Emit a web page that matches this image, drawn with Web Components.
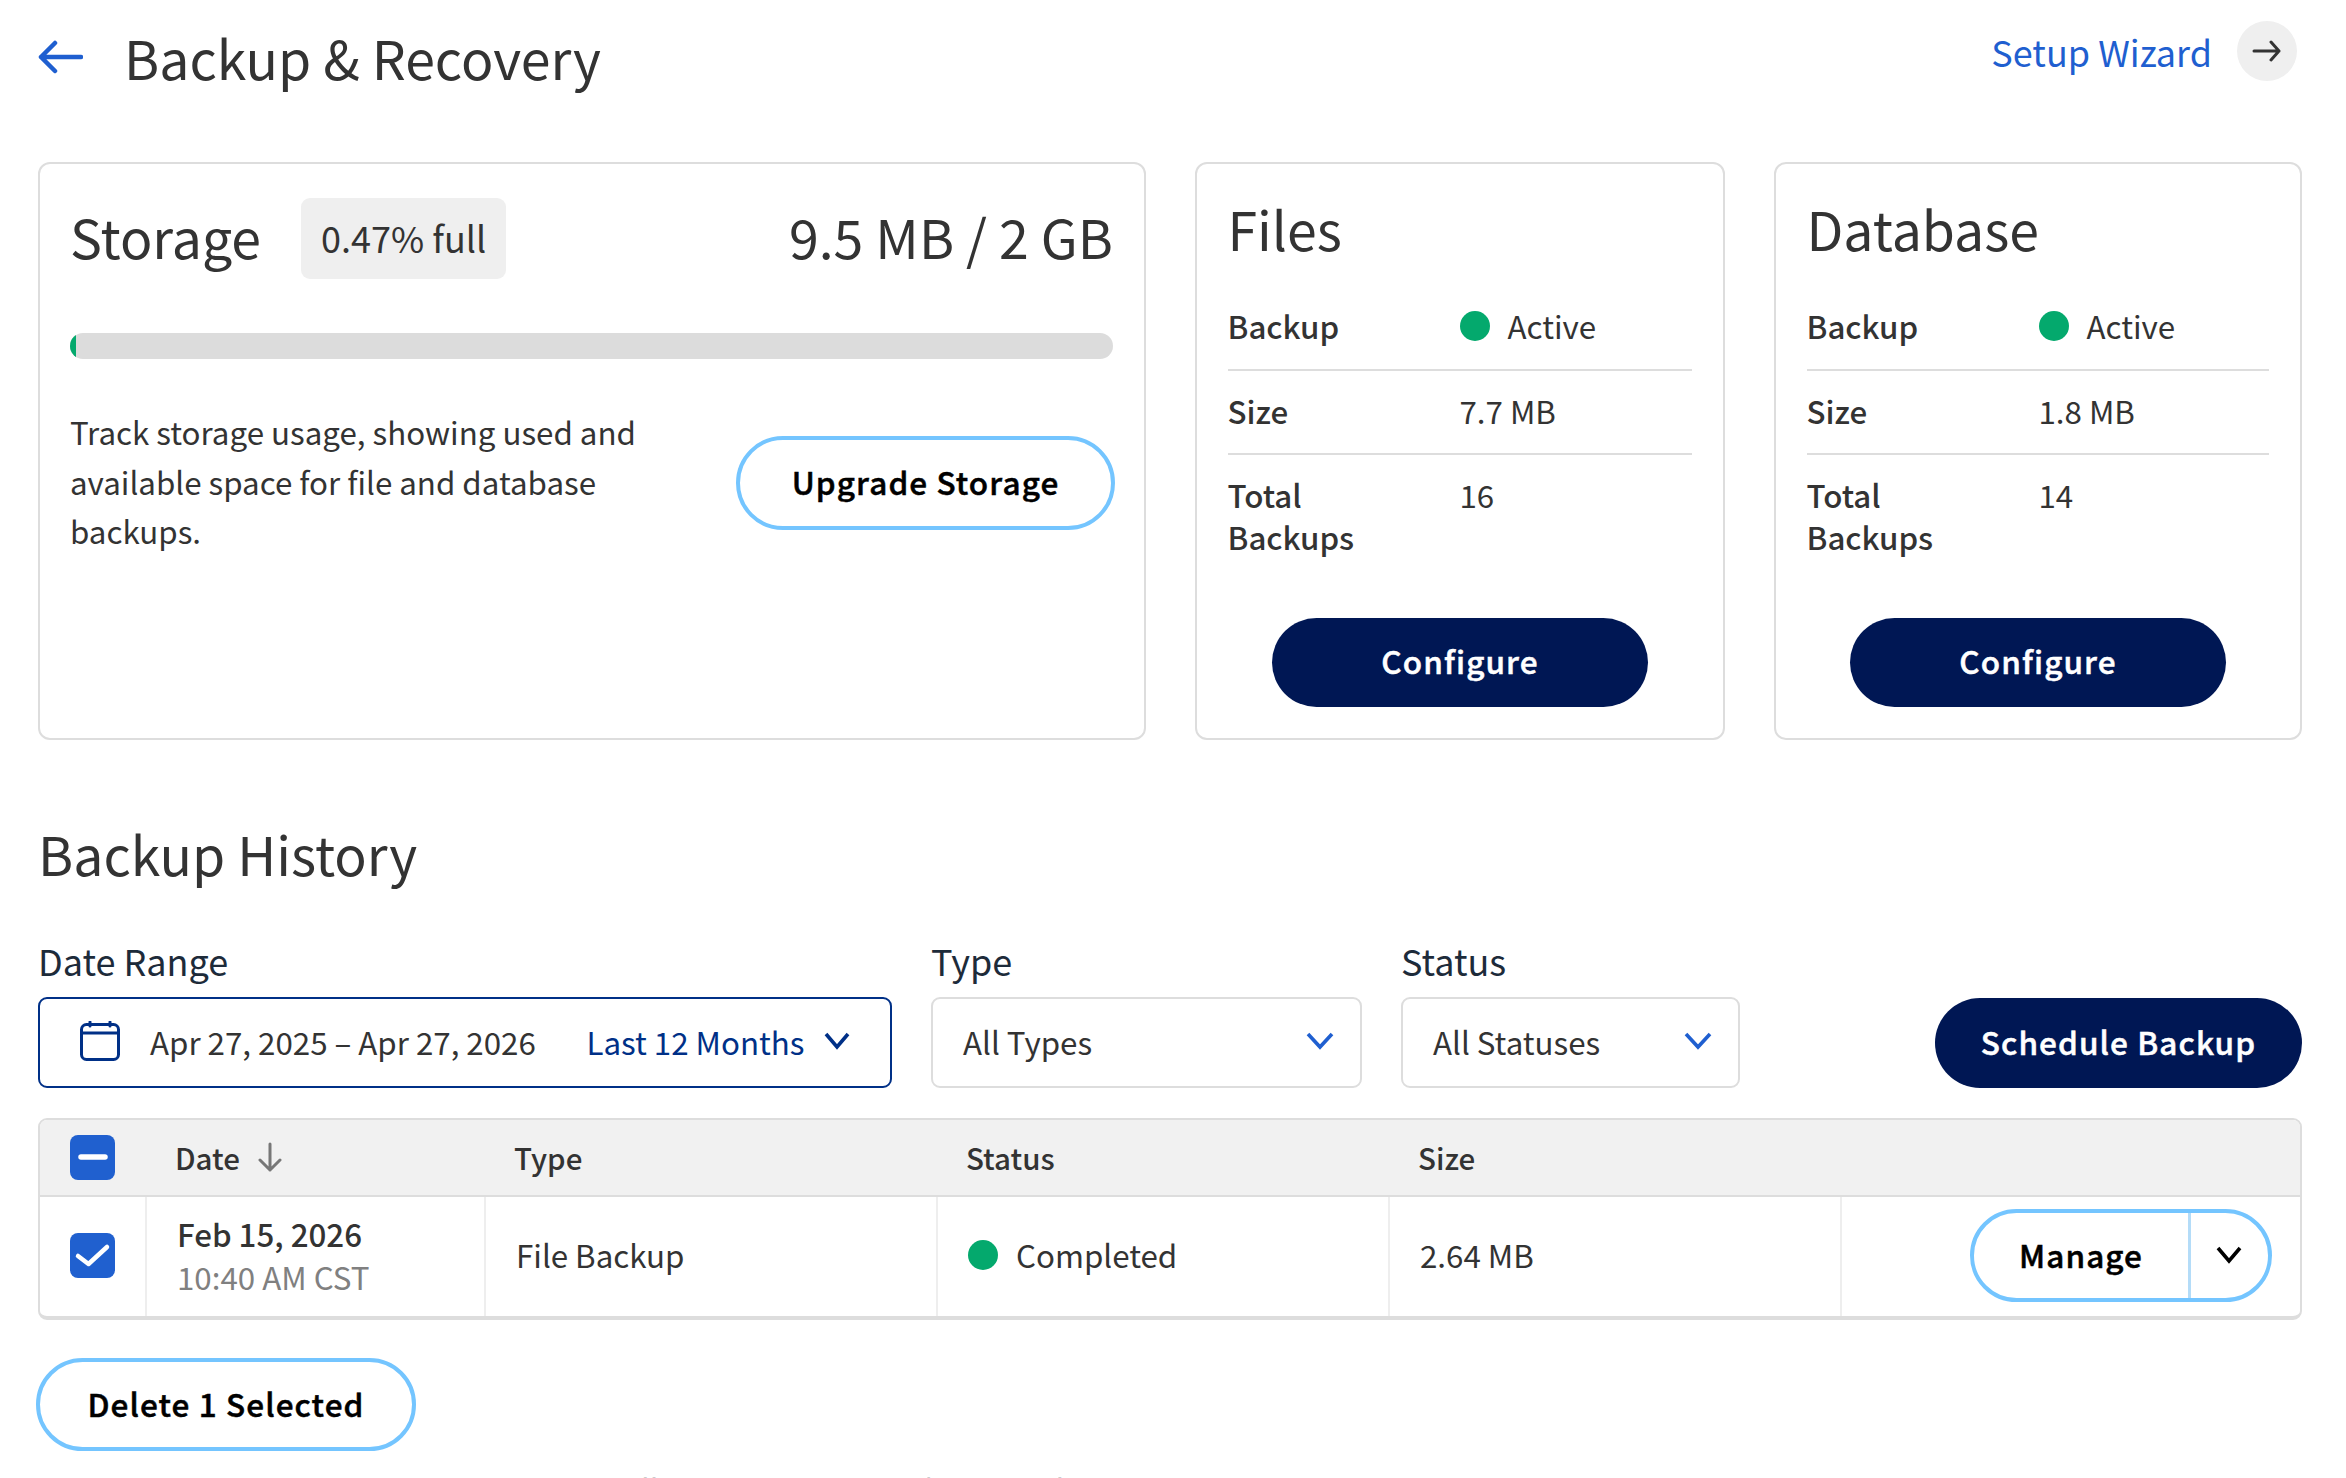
<!DOCTYPE html>
<html>
<head>
<meta charset="utf-8">
<title>Backup & Recovery</title>
<style>
html,body{margin:0;background:#fff;}
body{font-family:"Noto Sans CJK SC","Liberation Sans",sans-serif;color:#333;height:1478px;overflow:hidden;}
</style>
</head>
<body>
<backup-page></backup-page>
<script>
const baseStyle = `
  *{box-sizing:border-box;}
`

class PillButton extends HTMLElement{
    constructor(){
        super();
        const kind = this.getAttribute("kind") || "outline";
        this.attachShadow({mode:"open"}).innerHTML = `
        <style>
        ${baseStyle}
        :host{display:inline-flex;}
        .btn{display:flex;align-items:center;justify-content:center;border-radius:48px;font-size:31.5px;font-weight:500;-webkit-text-stroke:0.5px currentColor;line-height:40px;letter-spacing:1.1px;white-space:nowrap;width:100%;height:100%;padding-bottom:4px;}
        .outline{background:#fff;border:4px solid #74c5ff;color:#000;}
        .solid{background:#001754;color:#fff;}
        </style>
        <div class="btn ${kind}"><slot></slot></div>`;
    }
}
customElements.define("pill-button",PillButton);

class StatusDot extends HTMLElement{
    constructor(){
        super();
        this.attachShadow({mode:"open"}).innerHTML = `
        <style>
        :host{display:inline-flex;align-items:center;gap:18px;}
        i{display:block;width:30px;height:30px;border-radius:50%;background:#04a96d;flex:none;}
        </style>
        <i></i><span><slot></slot></span>`;
    }
}
customElements.define("status-dot",StatusDot);

class StatRow extends HTMLElement{
    constructor(){
        super();
        this.attachShadow({mode:"open"}).innerHTML = `
        <style>
        ${baseStyle}
        :host{display:grid;grid-template-columns:232px 1fr;font-size:31.3px;line-height:42px;padding:19px 0 21px;border-bottom:2px solid #ddd;color:#333;}
        :host([first]){padding-bottom:19.5px;}
        :host([last]){border-bottom:0;padding-bottom:0;}
        .k{font-weight:500;width:150px;}
        </style>
        <div class="k">${this.getAttribute("label")}</div><div><slot></slot></div>`;
    }
}
customElements.define("stat-row",StatRow);

class StatCard extends HTMLElement{
    constructor(){
        super();
        const h = this.getAttribute("heading");
        this.attachShadow({mode:"open"}).innerHTML = `
        <style>
        ${baseStyle}
        :host{display:block;border:2px solid #ddd;border-radius:12px;padding:28px 31px 29px 30.5px;height:578px;position:relative;background:#fff;}
        h2{margin:0 0 22px;font-size:53.6px;font-weight:400;line-height:72px;color:#333;}
        .foot{display:flex;justify-content:center;position:absolute;left:0;right:0;bottom:31.5px;}
        pill-button{width:376px;height:89px;}
        </style>
        <h2>${h}</h2>
        <slot></slot>
        <div class="foot"><pill-button kind="solid">Configure</pill-button></div>`;
    }
}
customElements.define("stat-card",StatCard);

class StorageCard extends HTMLElement{
    constructor(){
        super();
        this.attachShadow({mode:"open"}).innerHTML = `
        <style>
        ${baseStyle}
        :host{display:block;border:2px solid #ddd;border-radius:12px;padding:34px 31px 0 30px;height:578px;background:#fff;}
        .top{display:flex;align-items:center;height:81px;}
        h2{margin:0;font-size:53.6px;font-weight:400;line-height:72px;padding-bottom:6px;}
        .tag{margin-left:40px;height:81px;padding:0 20px 4px;background:#efefef;border-radius:9px;display:flex;align-items:center;font-size:36px;line-height:46px;color:#333;}
        .amt{margin-left:auto;font-size:53.6px;line-height:72px;padding-bottom:6px;}
        .bar{margin-top:54px;height:26px;border-radius:13px;background:#dcdcdc;overflow:hidden;}
        .bar i{display:block;height:100%;width:0.6%;background:#04a96d;}
        .low{display:flex;justify-content:space-between;margin-top:48px;}
        p{margin:0;width:600px;font-size:31.3px;line-height:49.5px;color:#333;}
        pill-button{width:379px;height:94px;margin-top:29px;margin-right:-2px;}
        </style>
        <div class="top"><h2>Storage</h2><div class="tag">0.47% full</div><div class="amt">9.5 MB / 2 GB</div></div>
        <div class="bar"><i></i></div>
        <div class="low">
          <p>Track storage usage, showing used and available space for file and database backups.</p>
          <pill-button>Upgrade Storage</pill-button>
        </div>`;
    }
}
customElements.define("storage-card",StorageCard);

class FieldSelect extends HTMLElement{
    constructor(){
        super();
        const w = this.getAttribute("width");
        this.attachShadow({mode:"open"}).innerHTML = `
        <style>
        ${baseStyle}
        :host{display:block;width:${w}px;}
        label{display:block;font-size:36px;line-height:46px;color:#1d2b3a;margin-bottom:14px;}
        .box{display:flex;align-items:center;justify-content:space-between;height:91px;border:2px solid #ddd;border-radius:9px;padding:0 26px 2px 30px;font-size:31.3px;color:#333;}
        svg{display:block;flex:none;margin-bottom:1px;}
        </style>
        <label>${this.getAttribute("label")}</label>
        <div class="box"><span>${this.getAttribute("value")}</span>
        <svg width="28" height="18" viewBox="0 0 28 18" fill="none" stroke="#1f5fd0" stroke-width="3.6"><path d="M2 2l12 13L26 2"/></svg></div>`;
    }
}
customElements.define("field-select",FieldSelect);

class DateRange extends HTMLElement{
    constructor(){
        super();
        this.attachShadow({mode:"open"}).innerHTML = `
        <style>
        ${baseStyle}
        :host{display:block;width:854px;}
        label{display:block;font-size:36px;line-height:46px;color:#1d2b3a;margin-bottom:14px;}
        .box{display:flex;align-items:center;height:91px;border:2px solid #003087;border-radius:9px;padding:0 40.5px 2px 40px;font-size:31.3px;color:#333;white-space:nowrap;}
        .val{margin-left:30px;}
        .rng{margin-left:auto;color:#003087;}
        .chev{margin-left:19px;margin-bottom:1px;}
        svg{display:block;flex:none;}
        </style>
        <label>Date Range</label>
        <div class="box">
        <svg width="40" height="40" viewBox="0 0 40 40" fill="none" stroke="#003087" stroke-width="3" stroke-linecap="round"><rect x="1.5" y="3.5" width="37" height="35" rx="5"/><path d="M1.5 12h37M10 1v4M30 1v4"/></svg>
        <span class="val">Apr 27, 2025 – Apr 27, 2026</span>
        <span class="rng">Last 12 Months</span>
        <svg class="chev" width="26" height="18" viewBox="0 0 26 18" fill="none" stroke="#003087" stroke-width="3.6"><path d="M2 2l11 13L24 2"/></svg>
        </div>`;
    }
}
customElements.define("date-range",DateRange);

class CheckBox extends HTMLElement{
    constructor(){
        super();
        const mark = this.getAttribute("mark") == "minus"
          ? `<path d="M11 22h24" stroke-width="5.5"/>`
          : `<path d="M8 23l10.5 8L37 14" stroke-width="4.5"/>`;
        this.attachShadow({mode:"open"}).innerHTML = `
        <style>
        :host{display:block;width:45px;height:45px;}
        svg{display:block;}
        </style>
        <svg width="45" height="45" viewBox="0 0 45 45"><rect width="45" height="45" rx="8" fill="#2060cf"/><g fill="none" stroke="#fff" stroke-linecap="round" stroke-linejoin="round">${mark}</g></svg>`;
    }
}
customElements.define("check-box",CheckBox);

class HistoryTable extends HTMLElement{
    constructor(){
        super();
        this.attachShadow({mode:"open"}).innerHTML = `
        <style>
        ${baseStyle}
        :host{display:block;border:2px solid #ddd;border-bottom-width:4px;border-radius:9px;overflow:hidden;}
        .r{display:grid;grid-template-columns:105px 339px 452px 452px 452px 1fr;}
        .head{height:77px;background:#f1f1f1;border-bottom:2px solid #ddd;font-size:29.5px;font-weight:500;line-height:40px;color:#333;}
        .head>div{display:flex;align-items:center;padding-left:30px;}
        .head>div:first-child{padding-left:30px;}
        .body{height:119px;font-size:31.3px;line-height:42px;color:#333;}
        .body>div{display:flex;align-items:center;padding-left:30px;padding-bottom:2px;border-left:2px solid #eee;}
        .body>div:first-child{border-left:0;padding-left:30px;}
        .dt{flex-direction:column;align-items:flex-start !important;justify-content:center;padding-bottom:3px !important;}
        b{font-weight:500;font-size:31.3px;line-height:44px;}
        small{font-size:31.3px;line-height:42px;color:#808080;}
        .act{justify-content:flex-end;padding-right:28px;}
        .split{display:flex;width:302px;height:93px;border:4px solid #74c5ff;border-radius:48px;color:#000;font-size:31.5px;font-weight:500;-webkit-text-stroke:0.5px currentColor;letter-spacing:1.1px;}
        .m{flex:1;display:flex;align-items:center;justify-content:center;border-right:3px solid #b4dcf8;padding-bottom:3px;}
        .c{width:77px;display:flex;align-items:center;justify-content:center;padding-right:2px;}
        svg{display:block;}
        .sort{margin-left:18px;}
        </style>
        <div class="r head">
          <div><check-box mark="minus"></check-box></div>
          <div>Date<svg class="sort" width="24" height="30" viewBox="0 0 24 30" fill="none" stroke="#777" stroke-width="3" stroke-linecap="round" stroke-linejoin="round"><path d="M12 2v26M2 18l10 10 10-10"/></svg></div>
          <div>Type</div><div>Status</div><div>Size</div><div></div>
        </div>
        <div class="r body">
          <div><check-box mark="check"></check-box></div>
          <div class="dt"><b>Feb 15, 2026</b><small>10:40 AM CST</small></div>
          <div>File Backup</div>
          <div><status-dot>Completed</status-dot></div>
          <div>2.64 MB</div>
          <div class="act"><div class="split"><div class="m">Manage</div><div class="c"><svg width="28" height="18" viewBox="0 0 28 18" fill="none" stroke="#000" stroke-width="3.6"><path d="M3 2l11 13L25 2"/></svg></div></div></div>
        </div>`;
    }
}
customElements.define("history-table",HistoryTable);

class BackupPage extends HTMLElement{
    constructor(){
        super();
        this.attachShadow({mode:"open"}).innerHTML = `
        <style>
        ${baseStyle}
        :host{display:block;padding:0 44px 0 38px;}
        header{display:flex;align-items:center;height:162px;padding-bottom:48px;}
        h1{margin:0 0 0 41px;font-size:53.6px;font-weight:400;line-height:72px;color:#333;}
        .wiz{margin-left:auto;align-self:flex-start;padding-top:21px;display:flex;align-items:flex-start;gap:25px;color:#1f5fd0;font-size:36px;line-height:48px;}
        .wiz span{padding-top:6px;}
        .go{width:60px;height:60px;border-radius:50%;background:#efefef;display:flex;align-items:center;justify-content:center;margin-right:5px;}
        svg{display:block;flex:none;}
        .cards{display:grid;grid-template-columns:1108px 530px 528px;gap:49px;}
        h3{margin:76.5px 0 0;font-size:53.6px;font-weight:400;line-height:72px;color:#333;}
        .filters{display:flex;align-items:flex-end;margin-top:48px;}
        .filters>*{margin-right:39px;}
        .filters pill-button{margin:0 0 0 auto;width:367px;height:90px;}
        history-table{margin-top:30px;}
        .del{margin-top:38.5px;}
        .del pill-button{width:380px;height:93px;margin-left:-2px;}
        .cut{text-align:center;font-size:31.3px;line-height:42px;margin-top:17.5px;padding-right:24px;color:#333;white-space:nowrap;}
        </style>
        <header>
          <svg width="45" height="34" viewBox="0 0 45 34" fill="none" stroke="#1f5fd0" stroke-width="4.5" stroke-linecap="round" stroke-linejoin="round"><path d="M43 17H3M17 3L3 17l14 14"/></svg>
          <h1>Backup &amp; Recovery</h1>
          <div class="wiz"><span>Setup Wizard</span><div class="go"><svg width="30" height="22" viewBox="0 0 30 22" fill="none" stroke="#333" stroke-width="3" stroke-linecap="round" stroke-linejoin="round"><path d="M2 11h25M19 2l8 9-8 9"/></svg></div></div>
        </header>
        <div class="cards">
          <storage-card></storage-card>
          <stat-card heading="Files">
            <stat-row first label="Backup"><status-dot>Active</status-dot></stat-row>
            <stat-row label="Size">7.7 MB</stat-row>
            <stat-row label="Total Backups" last>16</stat-row>
          </stat-card>
          <stat-card heading="Database">
            <stat-row first label="Backup"><status-dot>Active</status-dot></stat-row>
            <stat-row label="Size">1.8 MB</stat-row>
            <stat-row label="Total Backups" last>14</stat-row>
          </stat-card>
        </div>
        <h3>Backup History</h3>
        <div class="filters">
          <date-range></date-range>
          <field-select label="Type" value="All Types" width="431"></field-select>
          <field-select label="Status" value="All Statuses" width="339"></field-select>
          <pill-button kind="solid">Schedule Backup</pill-button>
        </div>
        <history-table></history-table>
        <div class="del"><pill-button>Delete 1 Selected</pill-button></div>
        <div class="cut">All backups are kept for the selected retention period and can be restored.</div>`;
    }
}
customElements.define("backup-page",BackupPage);
</script>
</body>
</html>
